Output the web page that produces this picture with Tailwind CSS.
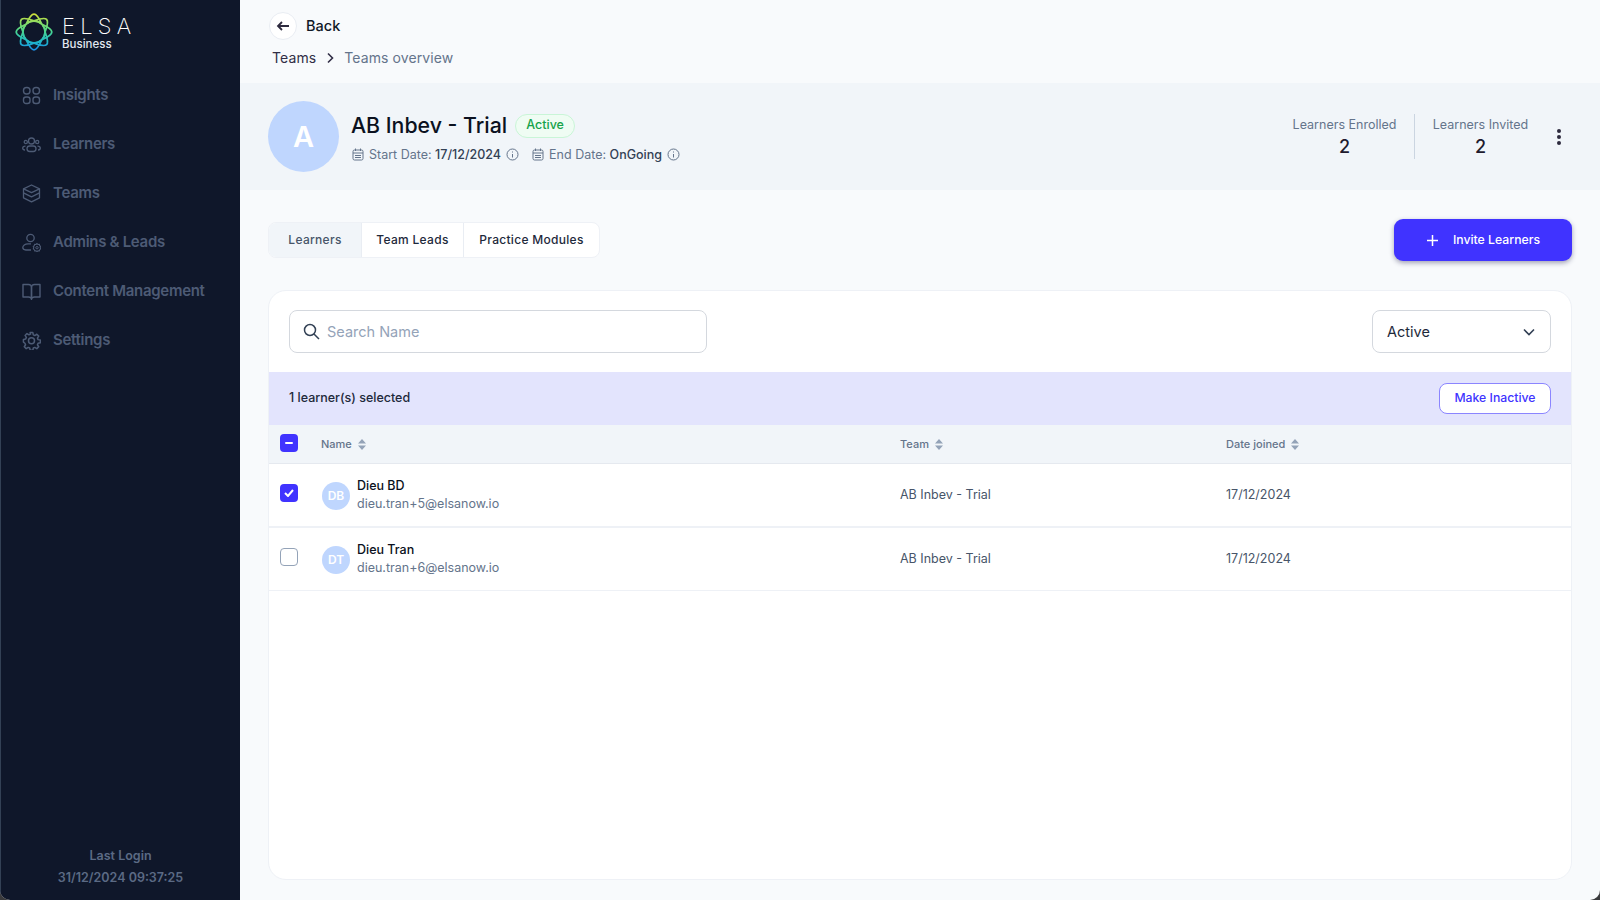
<!DOCTYPE html>
<html lang="en">
<head>
  <meta charset="UTF-8">
  <title>Teams overview</title>
  <script src="https://cdn.jsdelivr.net/npm/@tailwindcss/browser@4"></script>
</head>
<body class="bg-[#3a3a3c] font-['Inter','Liberation_Sans',sans-serif] overflow-hidden">
  <div class="w-[1600px] h-[900px] flex rounded-b-[10px] overflow-hidden bg-[#f8fafc]">
    <!-- sidebar -->
    <aside class="w-[240px] shrink-0 h-full bg-[#0f172a] border-l border-[#334155] flex flex-col">
      <div class="h-[71px] pl-[14px] pt-[13px] flex items-start gap-[9px]">
        <svg class="w-[38px] h-[38px] shrink-0" viewBox="-19 -19 38 38" fill="none">
          <defs>
            <linearGradient id="logo" x1="0" y1="-18" x2="0" y2="18" gradientUnits="userSpaceOnUse">
              <stop offset="0" stop-color="#cfe03a"/>
              <stop offset="0.45" stop-color="#4fd88a"/>
              <stop offset="0.75" stop-color="#1fb8c4"/>
              <stop offset="1" stop-color="#1a8fe8"/>
            </linearGradient>
            <mask id="petals" maskUnits="userSpaceOnUse" x="-19" y="-19" width="38" height="38">
              <g fill="none" stroke="white" stroke-width="1.800" stroke-linejoin="round">
                <path id="petal" d="M-7.500 -8.500C-5 -14-2.500-17.800 0-17.800C2.500-17.800 5-14 7.500-8.500C3-11.500-3-11.500-7.500-8.500Z"/>
                <path transform="rotate(45)" d="M-7.500 -8.500C-5 -14-2.500-17.800 0-17.800C2.500-17.800 5-14 7.500-8.500C3-11.500-3-11.500-7.500-8.500Z"/>
                <path transform="rotate(90)" d="M-7.500 -8.500C-5 -14-2.500-17.800 0-17.800C2.500-17.800 5-14 7.500-8.500C3-11.500-3-11.500-7.500-8.500Z"/>
                <path transform="rotate(135)" d="M-7.500 -8.500C-5 -14-2.500-17.800 0-17.800C2.500-17.800 5-14 7.500-8.500C3-11.500-3-11.500-7.500-8.500Z"/>
                <path transform="rotate(180)" d="M-7.500 -8.500C-5 -14-2.500-17.800 0-17.800C2.500-17.800 5-14 7.500-8.500C3-11.500-3-11.500-7.500-8.500Z"/>
                <path transform="rotate(225)" d="M-7.500 -8.500C-5 -14-2.500-17.800 0-17.800C2.500-17.800 5-14 7.500-8.500C3-11.500-3-11.500-7.500-8.500Z"/>
                <path transform="rotate(270)" d="M-7.500 -8.500C-5 -14-2.500-17.800 0-17.800C2.500-17.800 5-14 7.500-8.500C3-11.500-3-11.500-7.500-8.500Z"/>
                <path transform="rotate(315)" d="M-7.500 -8.500C-5 -14-2.500-17.800 0-17.800C2.500-17.800 5-14 7.500-8.500C3-11.500-3-11.500-7.500-8.500Z"/>
              </g>
            </mask>
          </defs>
          <rect x="-19" y="-19" width="38" height="38" fill="url(#logo)" mask="url(#petals)"/>
        </svg>
        <div class="text-white leading-none pt-[2px]">
          <div class="text-[22px] font-extralight tracking-[5.200px] leading-[22px]">ELSA</div>
          <div class="text-[11.500px] font-medium text-[#e2e8f0] leading-[12px] mt-[1px]">Business</div>
        </div>
      </div>
      <nav class="flex flex-col text-[15px] font-semibold tracking-[-0.3px] text-[#4d5b75]">
        <a class="h-[49px] flex items-center gap-[12px] pl-[21px]">
          <svg class="w-[19px] h-[19px]" viewBox="0 0 19 19" fill="none" stroke="currentColor" stroke-width="1.400"><rect x="1.500" y="1.500" width="6.500" height="6.500" rx="3"/><rect x="11" y="1.500" width="6.500" height="6.500" rx="3"/><rect x="1.500" y="11" width="6.500" height="6.500" rx="2.500"/><rect x="11" y="11" width="6.500" height="6.500" rx="2.500"/></svg>
          Insights
        </a>
        <a class="h-[49px] flex items-center gap-[12px] pl-[21px]">
          <svg class="w-[19px] h-[19px]" viewBox="0 0 19 19" fill="none" stroke="currentColor" stroke-width="1.300"><circle cx="9.500" cy="6" r="3"/><rect x="5" y="11" width="9" height="5.500" rx="2.700"/><circle cx="3.800" cy="7" r="1.600"/><circle cx="15.200" cy="7" r="1.600"/><path d="M3 15c-1.500 0-2.300-.8-2.300-1.800 0-1.300 1-2 2.800-2M16 15c1.500 0 2.300-.8 2.300-1.800 0-1.300-1-2-2.800-2"/></svg>
          Learners
        </a>
        <a class="h-[49px] flex items-center gap-[12px] pl-[21px]">
          <svg class="w-[19px] h-[19px]" viewBox="0 0 19 19" fill="none" stroke="currentColor" stroke-width="1.300" stroke-linejoin="round"><path d="M9.500 1 17.500 4.800 9.500 8.600 1.500 4.800Z"/><path d="M1.500 4.800v4l8 4 8-4v-4"/><path d="M1.500 8.800v5l8 4 8-4v-5"/></svg>
          Teams
        </a>
        <a class="h-[49px] flex items-center gap-[12px] pl-[21px]">
          <svg class="w-[19px] h-[19px]" viewBox="0 0 19 19" fill="none" stroke="currentColor" stroke-width="1.300"><circle cx="8.500" cy="5" r="3.700"/><path d="M9 10.800H6C3 10.800.8 12.500.8 14.600c0 1.500 1.200 2.400 3 2.400H9"/><path d="m15 10.600 1 .9 1.300-.1.4 1.200 1 .9-.5 1.200.5 1.100-1 .9-.4 1.200-1.300-.1-1 .8-1-.8-1.300.1-.4-1.200-1-.9.5-1.100-.5-1.200 1-.9.4-1.200 1.300.1Z" stroke-width="1.100"/><circle cx="15" cy="14.700" r="1.200" stroke-width="1"/></svg>
          Admins &amp; Leads
        </a>
        <a class="h-[49px] flex items-center gap-[12px] pl-[21px]">
          <svg class="w-[19px] h-[19px]" viewBox="0 0 19 19" fill="none" stroke="currentColor" stroke-width="1.400" stroke-linejoin="round"><path d="M1 2.500h5.500c1.700 0 3 1.200 3 2.800v12c0-1.400-1.300-2.300-3-2.300H1Z"/><path d="M18 2.500h-5.500c-1.700 0-3 1.200-3 2.800v12c0-1.400 1.300-2.300 3-2.300H18Z"/></svg>
          Content Management
        </a>
        <a class="h-[49px] flex items-center gap-[12px] pl-[21px]">
          <svg class="w-[19px] h-[19px]" viewBox="0 0 24 24" fill="none" stroke="currentColor" stroke-width="1.900" stroke-linejoin="round"><path d="M10.300 2h3.400l.6 2.900 1.900.8 2.500-1.600 2.400 2.400-1.600 2.500.8 1.900 2.900.6v3.400l-2.900.6-.8 1.900 1.600 2.500-2.400 2.400-2.500-1.600-1.900.8-.6 2.900h-3.400l-.6-2.900-1.900-.8-2.500 1.600-2.400-2.400 1.600-2.500-.8-1.900L1.800 14v-3.400l2.900-.6.8-1.900-1.600-2.500 2.400-2.400 2.500 1.600 1.900-.8Z"/><circle cx="12" cy="12.300" r="3.800"/></svg>
          Settings
        </a>
      </nav>
      <div class="mt-auto pb-[11px] text-center text-[12.500px] font-semibold text-[#5b6a84] leading-[22px]">
        <div>Last Login</div>
        <div>31/12/2024 09:37:25</div>
      </div>
    </aside>

    <!-- main -->
    <main class="flex-1 min-w-0 flex flex-col">
      <div class="h-[83px] pl-[29px] pt-[12px]">
        <div class="flex items-center gap-[9px] h-[27px]">
          <span class="w-[28px] h-[28px] rounded-full bg-white border border-[#e9edf3] flex items-center justify-center">
            <svg class="w-[14px] h-[14px]" viewBox="0 0 14 14" fill="none" stroke="#2d2a3e" stroke-width="1.800"><path d="M13 7H2M6 3 2 7l4 4"/></svg>
          </span>
          <span class="text-[14.500px] font-medium text-[#111827]">Back</span>
        </div>
        <div class="flex items-center gap-[9px] mt-[7px] ml-[3px] text-[14px] tracking-[0.1px] leading-[24px]">
          <span class="text-[#312e46]">Teams</span>
          <svg class="w-[10px] h-[12px]" viewBox="0 0 10 12" fill="none" stroke="#312e46" stroke-width="1.600"><path d="m3 1.500 4.500 4.500L3 10.500"/></svg>
          <span class="text-[#64748b]">Teams overview</span>
        </div>
      </div>

      <section class="h-[107px] bg-[#f1f5f9] pl-[28px] flex items-center">
        <div class="w-[71px] h-[71px] rounded-full bg-[#bfd6fe] text-white text-[29px] font-semibold flex items-center justify-center shrink-0">A</div>
        <div class="ml-[12px] mt-[3px]">
          <div class="flex items-center h-[28px]">
            <h1 class="text-[21.300px] font-medium text-[#0b1120]">AB Inbev - Trial</h1>
            <span class="ml-[8px] h-[24px] w-[60px] rounded-full bg-[#effcf3] border border-[#c9f5d7] text-[#16a34a] text-[12.500px] font-medium flex items-center justify-center">Active</span>
          </div>
          <div class="flex items-center mt-[5px] text-[12.500px] text-[#64748b] leading-[20px]">
            <svg class="w-[12px] h-[13px] mr-[5px] ml-[1px]" viewBox="0 0 12 13" fill="none" stroke="#64748b"><rect x="1" y="2" width="10" height="10" rx="1.500"/><path d="M1 5h10M3.500.500v2.500M8.500.500v2.500M3 7.500h6M3 9.500h6" /></svg>
            <span>Start Date:&nbsp;</span><span class="text-[#334155] font-medium">17/12/2024</span>
            <svg class="w-[13px] h-[13px] ml-[5px]" viewBox="0 0 13 13" fill="none" stroke="#64748b"><circle cx="6.500" cy="6.500" r="5.500"/><path d="M6.500 6v3.500M6.500 3.500v1"/></svg>
            <svg class="w-[12px] h-[13px] mr-[5px] ml-[13px]" viewBox="0 0 12 13" fill="none" stroke="#64748b"><rect x="1" y="2" width="10" height="10" rx="1.500"/><path d="M1 5h10M3.500.500v2.500M8.500.500v2.500M3 7.500h6M3 9.500h6" /></svg>
            <span>End Date:&nbsp;</span><span class="text-[#334155] font-medium">OnGoing</span>
            <svg class="w-[13px] h-[13px] ml-[5px]" viewBox="0 0 13 13" fill="none" stroke="#64748b"><circle cx="6.500" cy="6.500" r="5.500"/><path d="M6.500 6v3.500M6.500 3.500v1"/></svg>
          </div>
        </div>
        <div class="ml-auto flex items-center">
          <div class="w-[105px] text-center">
            <div class="text-[12.500px] whitespace-nowrap text-[#64748b] leading-[20px]">Learners Enrolled</div>
            <div class="text-[18px] font-medium text-[#1e1b2e] leading-[24px]">2</div>
          </div>
          <div class="w-px h-[45px] bg-[#cbd5e1] mx-[17px]"></div>
          <div class="w-[97px] text-center">
            <div class="text-[12.500px] whitespace-nowrap text-[#64748b] leading-[20px]">Learners Invited</div>
            <div class="text-[18px] font-medium text-[#1e1b2e] leading-[24px]">2</div>
          </div>
          <svg class="w-[6px] h-[18px] ml-[27px] mr-[38px]" viewBox="0 0 6 18" fill="#2d2a3e"><circle cx="3" cy="3" r="2"/><circle cx="3" cy="9" r="2"/><circle cx="3" cy="15" r="2"/></svg>
        </div>
      </section>

      <div class="h-[100px] pl-[28px] pr-[28px] flex items-center justify-between">
        <div class="flex h-[36px] rounded-[8px] border border-[#eef1f6] bg-white overflow-hidden text-[12px] font-medium tracking-[0.3px]">
          <span class="w-[93px] bg-[#f1f5f9] text-[#475569] flex items-center justify-center border-r border-[#e9edf3]">Learners</span>
          <span class="w-[102px] text-[#1e293b] flex items-center justify-center border-r border-[#e9edf3]">Team Leads</span>
          <span class="w-[135px] text-[#1e293b] flex items-center justify-center">Practice Modules</span>
        </div>
        <button class="w-[178px] h-[42px] rounded-[9px] bg-[#4033ff] shadow-[0_2px_5px_rgba(30,27,75,0.4)] text-white text-[12.250px] font-medium flex items-center justify-center gap-[14px]">
          <svg class="w-[13px] h-[13px]" viewBox="0 0 13 13" fill="none" stroke="white" stroke-width="1.500"><path d="M6.500 1v11M1 6.500h11"/></svg>
          Invite Learners
        </button>
      </div>

      <div class="ml-[28px] mr-[28px] h-[590px] rounded-[18px] bg-white border border-[#eef1f6] overflow-hidden">
        <div class="h-[81px] pl-[20px] pr-[20px] flex items-center justify-between">
          <div class="w-[418px] h-[43px] rounded-[8px] border border-[#d4d8de] flex items-center pl-[13px] text-[14.500px] text-[#94a3b8]">
            <svg class="w-[17px] h-[17px] mr-[7px]" viewBox="0 0 17 17" fill="none" stroke="#334155" stroke-width="1.500"><circle cx="7" cy="7" r="5.500"/><path d="m11 11 5 5"/></svg>
            Search Name
          </div>
          <div class="w-[179px] h-[43px] rounded-[8px] border border-[#d4d8de] flex items-center justify-between pl-[14px] pr-[15px] text-[14.500px] text-[#1e293b]">
            Active
            <svg class="w-[12px] h-[8px]" viewBox="0 0 12 8" fill="none" stroke="#334155" stroke-width="1.600"><path d="m1 1.500 5 5 5-5"/></svg>
          </div>
        </div>
        <div class="h-[53px] bg-[#e3e4fd] pl-[20px] pr-[20px] flex items-center justify-between text-[12.500px] font-medium text-[#1e293b]">
          <span>1 learner(s) selected</span>
          <span class="w-[112px] h-[31px] rounded-[8px] bg-white border border-[#8b85ff] text-[12.250px] text-[#4033ff] flex items-center justify-center">Make Inactive</span>
        </div>
        <div class="h-[39px] bg-[#f1f5f9] border-b border-[#e5e9ef] grid grid-cols-[52px_579px_326px_1fr] items-center text-[11px] font-medium text-[#64748b]">
          <div class="pl-[11px] -mt-[3px]">
            <span class="w-[18px] h-[18px] rounded-[4px] bg-[#4033ff] flex items-center justify-center"><span class="w-[8px] h-[2px] bg-white rounded-full"></span></span>
          </div>
          <div class="flex items-center gap-[6px]">Name
            <svg class="w-[8px] h-[11px]" viewBox="0 0 8 11" fill="#94a3b8"><path d="M4 0 8 4.500H0ZM4 11 0 6.500H8Z"/></svg>
          </div>
          <div class="flex items-center gap-[6px]">Team
            <svg class="w-[8px] h-[11px]" viewBox="0 0 8 11" fill="#94a3b8"><path d="M4 0 8 4.500H0ZM4 11 0 6.500H8Z"/></svg>
          </div>
          <div class="flex items-center gap-[6px]">Date joined
            <svg class="w-[8px] h-[11px]" viewBox="0 0 8 11" fill="#94a3b8"><path d="M4 0 8 4.500H0ZM4 11 0 6.500H8Z"/></svg>
          </div>
        </div>
        <div class="h-[64px] pt-[1px] border-b-2 border-[#eef1f6] grid grid-cols-[52px_579px_326px_1fr] items-center text-[12.500px] text-[#475569]">
          <div class="pl-[11px] -mt-[6px]">
            <span class="w-[18px] h-[18px] rounded-[4px] bg-[#4033ff] flex items-center justify-center">
              <svg class="w-[10px] h-[8px]" viewBox="0 0 10 8" fill="none" stroke="white" stroke-width="2"><path d="m1 4 3 3 5-6"/></svg>
            </span>
          </div>
          <div class="flex items-center gap-[7px]">
            <span class="ml-[1px] w-[28px] h-[28px] rounded-full bg-[#bfd6fe] text-white text-[12px] font-semibold flex items-center justify-center">DB</span>
            <div class="leading-[18px] -mt-[1px]">
              <div class="text-[#0b1120] font-medium">Dieu BD</div>
              <div class="text-[#64748b]">dieu.tran+5@elsanow.io</div>
            </div>
          </div>
          <div>AB Inbev - Trial</div>
          <div>17/12/2024</div>
        </div>
        <div class="h-[63px] pt-[1px] border-b border-[#eef1f6] grid grid-cols-[52px_579px_326px_1fr] items-center text-[12.500px] text-[#475569]">
          <div class="pl-[11px] -mt-[6px]">
            <span class="block w-[18px] h-[18px] rounded-[4px] bg-white border border-[#94a3b8]"></span>
          </div>
          <div class="flex items-center gap-[7px]">
            <span class="ml-[1px] w-[28px] h-[28px] rounded-full bg-[#bfd6fe] text-white text-[12px] font-semibold flex items-center justify-center">DT</span>
            <div class="leading-[18px] -mt-[1px]">
              <div class="text-[#0b1120] font-medium">Dieu Tran</div>
              <div class="text-[#64748b]">dieu.tran+6@elsanow.io</div>
            </div>
          </div>
          <div>AB Inbev - Trial</div>
          <div>17/12/2024</div>
        </div>
      </div>
    </main>
  </div>
</body>
</html>
